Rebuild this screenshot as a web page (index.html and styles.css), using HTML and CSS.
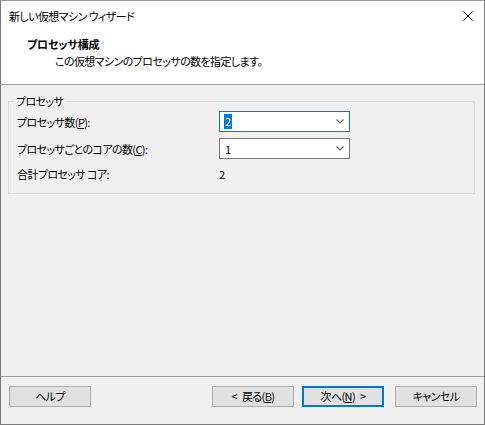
FILE: index.html
```html
<!DOCTYPE html>
<html lang="ja">
<head>
<meta charset="utf-8">
<title>新しい仮想マシン ウィザード</title>
<link rel="stylesheet" href="styles.css">
</head>
<body>
<div class="window">
  <div class="titlebar">
    <span class="title">新しい仮想マシン ウィザード</span>
    <svg class="close" width="10" height="10" viewBox="0 0 10 10"><path d="M0.5 0.5L9.5 9.5M9.5 0.5L0.5 9.5" stroke="#000" stroke-width="1" fill="none"/></svg>
  </div>
  <div class="header">
    <div class="h-title">プロセッサ構成</div>
    <div class="h-sub">この仮想マシンのプロセッサの数を指定します。</div>
  </div>
  <div class="content">
    <fieldset class="group">
      <legend>プロセッサ</legend>
      <div class="rows">
        <div class="label">プロセッサ数(<u>P</u>):</div>
        <div class="combo focused"><span class="sel">2</span>
          <svg class="chev" width="8" height="5" viewBox="0 0 8 5"><path d="M0.5 0.5L4 4L7.5 0.5" stroke="#606060" stroke-width="1.2" fill="none"/></svg>
        </div>
        <div class="label">プロセッサごとのコアの数(<u>C</u>):</div>
        <div class="combo"><span class="val">1</span>
          <svg class="chev" width="8" height="5" viewBox="0 0 8 5"><path d="M0.5 0.5L4 4L7.5 0.5" stroke="#606060" stroke-width="1.2" fill="none"/></svg>
        </div>
        <div class="label">合計プロセッサ コア:</div>
        <div class="static">2</div>
      </div>
    </fieldset>
  </div>
  <div class="footer">
    <button class="btn">ヘルプ</button>
    <div class="spacer"></div>
    <button class="btn">&lt;&ensp;戻る(<u>B</u>)</button>
    <button class="btn default">次へ(<u>N</u>)&ensp;&gt;</button>
    <button class="btn cancel">キャンセル</button>
  </div>
</div>
</body>
</html>
```
FILE: styles.css
```css
html, body {
  margin: 0;
  padding: 0;
  background: #ffffff;
}
body {
  font-family: "Noto Sans CJK JP", "Noto Sans", sans-serif;
  font-size: 11px;
  letter-spacing: -0.6px;
  font-feature-settings: "palt";
  color: #000;
}
.window {
  width: 485px;
  height: 425px;
  box-sizing: border-box;
  border: 1px solid #7a7a7a;
  border-top-color: #9a9a9a;
  display: flex;
  flex-direction: column;
  background: #f0f0f0;
}
.titlebar {
  height: 29px;
  background: #fff;
  display: flex;
  align-items: center;
  padding: 0 11px 0 8px;
}
.title {
  flex: 1;
  line-height: 16px;
}
.close {
  display: block;
}
.header {
  height: 55px;
  box-sizing: border-box;
  background: #fff;
  border-bottom: 1px solid #a0a0a0;
  padding-top: 6px;
}
.h-title {
  font-weight: bold;
  letter-spacing: -0.2px;
  line-height: 16px;
  padding-left: 26px;
}
.h-sub {
  line-height: 16px;
  margin-top: 1px;
  padding-left: 54px;
}
.content {
  flex: 1;
  padding: 8px 9px 0 7px;
}
.group {
  margin: 0;
  border: 1px solid #dcdcdc;
  padding: 2px 8px 11px 8px;
}
.group legend {
  padding: 0 2px;
  margin-left: -3px;
  line-height: 16px;
}
.rows {
  display: grid;
  grid-template-columns: 202px 131px;
  grid-template-rows: 21px 21px 17px;
  row-gap: 6px;
}
.rows .label, .rows .static {
  display: flex;
  align-items: center;
}
.combo {
  box-sizing: border-box;
  height: 21px;
  border: 1px solid #7a7a7a;
  background: #fff;
  display: flex;
  align-items: center;
  padding: 0 5px 0 4px;
}
.combo.focused {
  border-color: #0078d7;
}
.combo .sel {
  background: #0078d7;
  color: #fff;
  line-height: 15px;
  padding: 0 1px;
}
.combo .val {
  padding: 0 1px;
}
.chev {
  margin-left: auto;
  display: block;
}
.footer {
  height: 38px;
  border-top: 1px solid #a0a0a0;
  display: flex;
  align-items: flex-start;
  padding: 9px 7px 0 8px;
}
.spacer {
  flex: 1;
}
.btn {
  width: 82px;
  height: 21px;
  box-sizing: border-box;
  border: 1px solid #adadad;
  background: #e1e1e1;
  font-family: inherit;
  font-size: 11px;
  letter-spacing: -0.6px;
  font-feature-settings: "palt";
  color: #000;
  padding: 0;
  margin: 0 0 0 8px;
  line-height: 17px;
}
.btn:first-child {
  margin-left: 0;
}
.btn.default {
  border: 2px solid #0078d7;
  line-height: 15px;
}
.btn.cancel {
  margin-left: 11px;
}
```
